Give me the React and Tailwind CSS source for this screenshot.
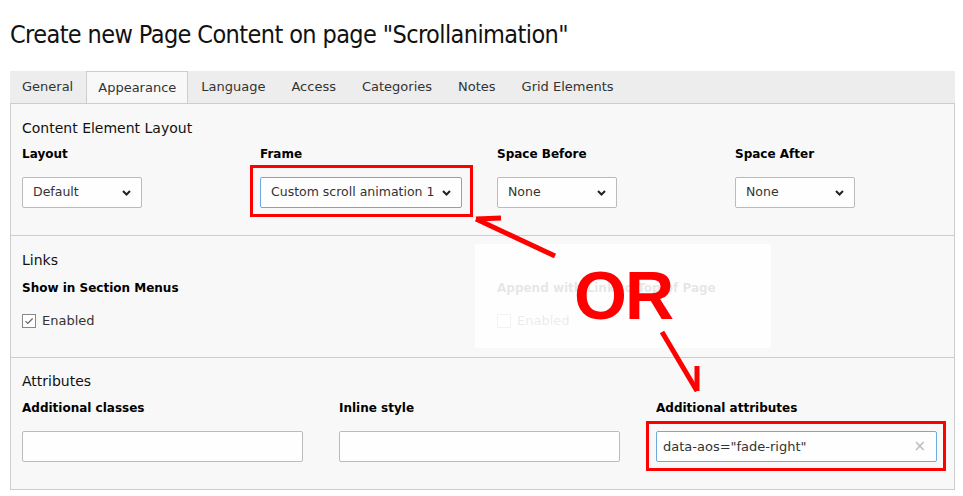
import React from "react";

const tabs = ["General", "Appearance", "Language", "Access", "Categories", "Notes", "Grid Elements"];

function Chevron() {
  return (
    <svg width="9" height="6" viewBox="0 0 9 6" className="shrink-0">
      <path d="M1 1l3.5 3.5L8 1" fill="none" stroke="#222" strokeWidth="2" />
    </svg>
  );
}

function Select({ value, width, focus }) {
  return (
    <div
      className={`flex h-[31px] items-center justify-between rounded-[2px] border bg-[#fefefe] pl-[10px] pr-[10px] text-[12.5px] text-[#333] ${
        focus ? "border-[#6daae0]" : "border-[#bbbbbb]"
      } ${width}`}
    >
      <span>{value}</span>
      <Chevron />
    </div>
  );
}

function Checkbox({ checked, label }) {
  return (
    <div className="flex h-[18px] items-center gap-[6px] text-[13px] text-[#333]">
      <span className="flex h-[14px] w-[14px] items-center justify-center border border-[#888] bg-white">
        {checked && (
          <svg width="10" height="10" viewBox="0 0 10 10">
            <path d="M1.5 5.2l2.3 2.3L8.6 2.5" fill="none" stroke="#666" strokeWidth="1.2" />
          </svg>
        )}
      </span>
      <span>{label}</span>
    </div>
  );
}

function Label({ children }) {
  return <div className="h-[18px] text-[12px] font-bold leading-[18px] text-black">{children}</div>;
}

function Heading({ children }) {
  return <div className="h-[20px] text-[14px] leading-[20px] text-[#111]">{children}</div>;
}

export default function App() {
  return (
    <div className="relative h-[496px] w-[963px] overflow-hidden bg-white font-['DejaVu_Sans',Verdana,sans-serif]">
      <div className="px-[10px] pt-[20px]">
        <h1 className="h-[30px] whitespace-nowrap font-['DejaVu_Sans_Condensed','Liberation_Sans_Narrow',sans-serif] text-[25px] leading-[30px] tracking-[-0.6px] text-[#111] [font-stretch:condensed]">
          Create new Page Content on page "Scrollanimation"
        </h1>

        {/* tab bar */}
        <div className="mt-[21px] flex h-[32px] w-[945px] bg-[#ededed] text-[13px] text-[#333]">
          {tabs.map((t, i) =>
            t === "Appearance" ? (
              <div
                key={t}
                className="relative z-10 flex h-[32px] items-center border border-b-0 border-[#cdcdcd] bg-[#f8f8f8] px-[11px]"
              >
                {t}
              </div>
            ) : (
              <div key={t} className={`flex h-[31px] items-center ${i === 0 ? "pl-[12px] pr-[13px]" : "px-[13px]"}`}>
                {t}
              </div>
            )
          )}
        </div>

        {/* panel */}
        <div className="w-[945px] border border-[#cdcdcd] bg-[#f8f8f8]">
          <div className="border-b border-[#cdcdcd] px-[11px] pb-[27px] pt-[14px]">
            <Heading>Content Element Layout</Heading>
            <div className="mt-[7px] grid grid-cols-[238px_237px_238px_238px]">
              <div>
                <Label>Layout</Label>
                <div className="mt-[14px]">
                  <Select value="Default" width="w-[120px]" />
                </div>
              </div>
              <div>
                <Label>Frame</Label>
                <div className="relative mt-[14px] w-[202px]">
                  <Select value="Custom scroll animation 1" width="w-[202px]" focus />
                  <div className="absolute -bottom-[9px] -left-[10px] -right-[11px] -top-[12px] border-[3px] border-[#ff0000]" />
                </div>
              </div>
              <div>
                <Label>Space Before</Label>
                <div className="mt-[14px]">
                  <Select value="None" width="w-[120px]" />
                </div>
              </div>
              <div>
                <Label>Space After</Label>
                <div className="mt-[14px]">
                  <Select value="None" width="w-[120px]" />
                </div>
              </div>
            </div>
          </div>

          <div className="border-b border-[#cdcdcd] px-[11px] pb-[27px] pt-[14px]">
            <Heading>Links</Heading>
            <div className="mt-[9px] grid grid-cols-[475px_238px]">
              <div>
                <Label>Show in Section Menus</Label>
                <div className="mt-[15px]">
                  <Checkbox checked label="Enabled" />
                </div>
              </div>
              <div>
                <Label>Append with Link to Top of Page</Label>
                <div className="mt-[15px]">
                  <Checkbox label="Enabled" />
                </div>
              </div>
            </div>
          </div>

          <div className="px-[11px] pb-[27px] pt-[13px]">
            <Heading>Attributes</Heading>
            <div className="mt-[8px] grid grid-cols-[281px_281px_281px] gap-x-[36px]">
              <div>
                <Label>Additional classes</Label>
                <div className="mt-[14px] h-[31px] rounded-[2px] border border-[#bbbbbb] bg-[#fefefe]" />
              </div>
              <div>
                <Label>Inline style</Label>
                <div className="mt-[14px] h-[31px] rounded-[2px] border border-[#bbbbbb] bg-[#fefefe]" />
              </div>
              <div>
                <Label>Additional attributes</Label>
                <div className="relative mt-[14px]">
                  <div className="flex h-[31px] items-center justify-between rounded-[2px] border border-[#6daae0] bg-[#fefefe] pl-[6px] pr-[10px] text-[13px] text-[#333]">
                    <span>data-aos="fade-right"</span>
                    <span className="text-[15px] leading-none text-[#bbb]">×</span>
                  </div>
                  <div className="absolute -bottom-[9px] -left-[10px] -right-[9px] -top-[10px] border-[3px] border-[#ff0000]" />
                </div>
              </div>
            </div>
          </div>
        </div>
      </div>

      {/* annotation overlay */}
      <div className="absolute left-[475px] top-[244px] h-[104px] w-[296px] bg-white/[0.9]" />
      <div className="absolute left-[574px] top-[261px] font-['Liberation_Sans',Arial,sans-serif] text-[68px] font-bold leading-none tracking-[-2px] text-[#ff0000]">
        OR
      </div>
      <svg className="pointer-events-none absolute inset-0" width="963" height="496" viewBox="0 0 963 496">
        <g stroke="#ff0000" strokeWidth="5" fill="none">
          <path d="M476 219L555 256" />
          <path d="M476 219L501 218" />
          <path d="M662 332L697 391" />
          <path d="M697 391L697 366" />
        </g>
      </svg>
    </div>
  );
}
